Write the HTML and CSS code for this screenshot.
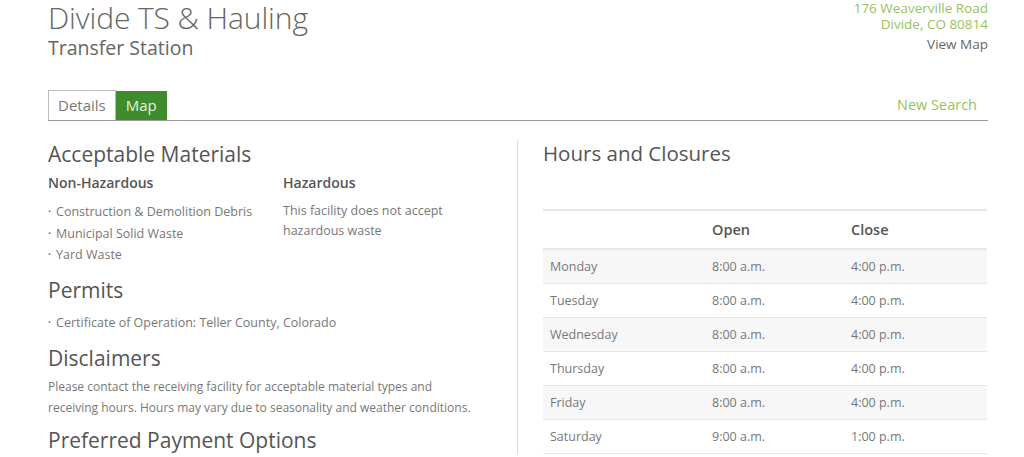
FILE: index.html
```html
<!DOCTYPE html>
<html>
<head>
<meta charset="utf-8">
<link rel="stylesheet" href="styles.css">
</head>
<body>
<div class="page">
  <header class="top">
    <div class="titles">
      <h1 class="title">Divide TS &amp; Hauling</h1>
      <div class="subtitle">Transfer Station</div>
    </div>
    <div class="address">
      <div class="addr-line">176 Weaverville Road</div>
      <div class="addr-line">Divide, CO 80814</div>
      <a class="view-map">View Map</a>
    </div>
  </header>

  <nav class="tabs">
    <span class="tab tab-active">Details</span>
    <span class="tab tab-map">Map</span>
    <a class="new-search">New Search</a>
  </nav>

  <div class="content">
    <section class="left">
      <h2 class="h2">Acceptable Materials</h2>
      <div class="materials">
        <div class="mat-col">
          <h3 class="h3">Non-Hazardous</h3>
          <ul class="list">
            <li>Construction &amp; Demolition Debris</li>
            <li>Municipal Solid Waste</li>
            <li>Yard Waste</li>
          </ul>
        </div>
        <div class="mat-col">
          <h3 class="h3">Hazardous</h3>
          <p class="text">This facility does not accept hazardous waste</p>
        </div>
      </div>
      <h2 class="h2">Permits</h2>
      <ul class="list">
        <li>Certificate of Operation: Teller County, Colorado</li>
      </ul>
      <h2 class="h2">Disclaimers</h2>
      <p class="text text-wide">Please contact the receiving facility for acceptable material types and receiving hours. Hours may vary due to seasonality and weather conditions.</p>
      <h2 class="h2">Preferred Payment Options</h2>
    </section>
    <section class="right">
      <h2 class="h2">Hours and Closures</h2>
      <table class="hours">
        <thead>
          <tr><th></th><th>Open</th><th>Close</th></tr>
        </thead>
        <tbody>
          <tr><td>Monday</td><td>8:00 a.m.</td><td>4:00 p.m.</td></tr>
          <tr><td>Tuesday</td><td>8:00 a.m.</td><td>4:00 p.m.</td></tr>
          <tr><td>Wednesday</td><td>8:00 a.m.</td><td>4:00 p.m.</td></tr>
          <tr><td>Thursday</td><td>8:00 a.m.</td><td>4:00 p.m.</td></tr>
          <tr><td>Friday</td><td>8:00 a.m.</td><td>4:00 p.m.</td></tr>
          <tr><td>Saturday</td><td>9:00 a.m.</td><td>1:00 p.m.</td></tr>
        </tbody>
      </table>
    </section>
  </div>
</div>
</body>
</html>
```

FILE: styles.css
```css
html, body {
  margin: 0;
  padding: 0;
  background: #fff;
  font-family: "Open Sans", "Noto Sans", Arial, sans-serif;
  color: #666;
  overflow: hidden;
}
.page {
  width: 940px;
  margin-left: 48px;
}
.top {
  display: flex;
  justify-content: space-between;
  height: 90px;
}
.title {
  margin: 0;
  font-size: 30px;
  font-weight: 300;
  line-height: 36px;
  color: #666;
  letter-spacing: -0.1px;
}
.subtitle {
  font-size: 19.5px;
  line-height: 22px;
  margin-top: 1px;
  color: #666;
  font-weight: 400;
}
.address {
  text-align: right;
  font-size: 13.5px;
  line-height: 16px;
}
.addr-line { color: #98c25c; }
.view-map {
  display: block;
  color: #666;
  margin-top: 4px;
}
.tabs {
  display: flex;
  align-items: flex-end;
  border-bottom: 1px solid #999;
  height: 30px;
}
.tab {
  font-size: 15px;
  line-height: 28px;
  padding: 0 9px;
  height: 29px;
  box-sizing: border-box;
}
.tab-active {
  border: 1px solid #bbb;
  border-bottom: none;
  background: #fff;
  color: #777;
  height: 30px;
  line-height: 28px;
}
.tab-map {
  background: #3e8c2c;
  color: #e6f3dc;
  padding: 0 10px;
}
.new-search {
  margin-left: auto;
  margin-right: 11px;
  align-self: center;
  font-size: 14.5px;
  color: #98c25c;
  margin-top: -2px;
}
.content {
  display: flex;
  margin-top: 19px;
}
.left {
  width: 470px;
  border-right: 1px solid #ddd;
  box-sizing: border-box;
}
.right {
  flex: 1;
  padding-left: 25px;
}
.h2 {
  margin: 0;
  font-size: 21px;
  font-weight: 400;
  line-height: 28px;
  color: #555;
}
.right .h2 { font-size: 20.5px; line-height: 26px; }
.materials {
  display: flex;
  margin-bottom: 6px;
}
.mat-col:first-child { width: 235px; }
.mat-col:last-child { width: 175px; }
.h3 {
  margin: 0;
  font-size: 14px;
  font-weight: 600;
  color: #555;
  line-height: 20px;
  padding-top: 5px;
}
.list {
  list-style: none;
  margin: 8px 0 4px;
  padding: 0;
  font-size: 12.5px;
  line-height: 21.5px;
  color: #777;
}
.list li::before {
  content: "\2022";
  font-size: 8px;
  line-height: 0;
  margin-right: 5px;
  position: relative;
  top: -2px;
}
.left > .list { margin-bottom: 11px; }
.text {
  margin: 8px 0 6px;
  font-size: 12.5px;
  line-height: 20px;
  color: #777;
}
.text-wide {
  font-size: 12px;
  max-width: 428px;
  line-height: 21px;
  margin-top: 4px;
  margin-bottom: 8px;
}
.hours {
  width: 444px;
  margin-top: 43px;
  border-collapse: collapse;
  font-size: 12.5px;
  color: #777;
}
.hours th {
  text-align: left;
  font-size: 14.5px;
  font-weight: 600;
  color: #555;
  height: 37px;
  border-top: 2px solid #e6e6e6;
  border-bottom: 2px solid #e6e6e6;
  padding: 0;
}
.hours td {
  height: 33px;
  padding: 0;
  border-bottom: 1px solid #e6e6e6;
}
.hours td:first-child { padding-left: 7px; width: 162px; }
.hours td:nth-child(2), .hours th:nth-child(2) { width: 139px; }
.hours tbody tr:nth-child(odd) { background: #f7f7f7; }
```
